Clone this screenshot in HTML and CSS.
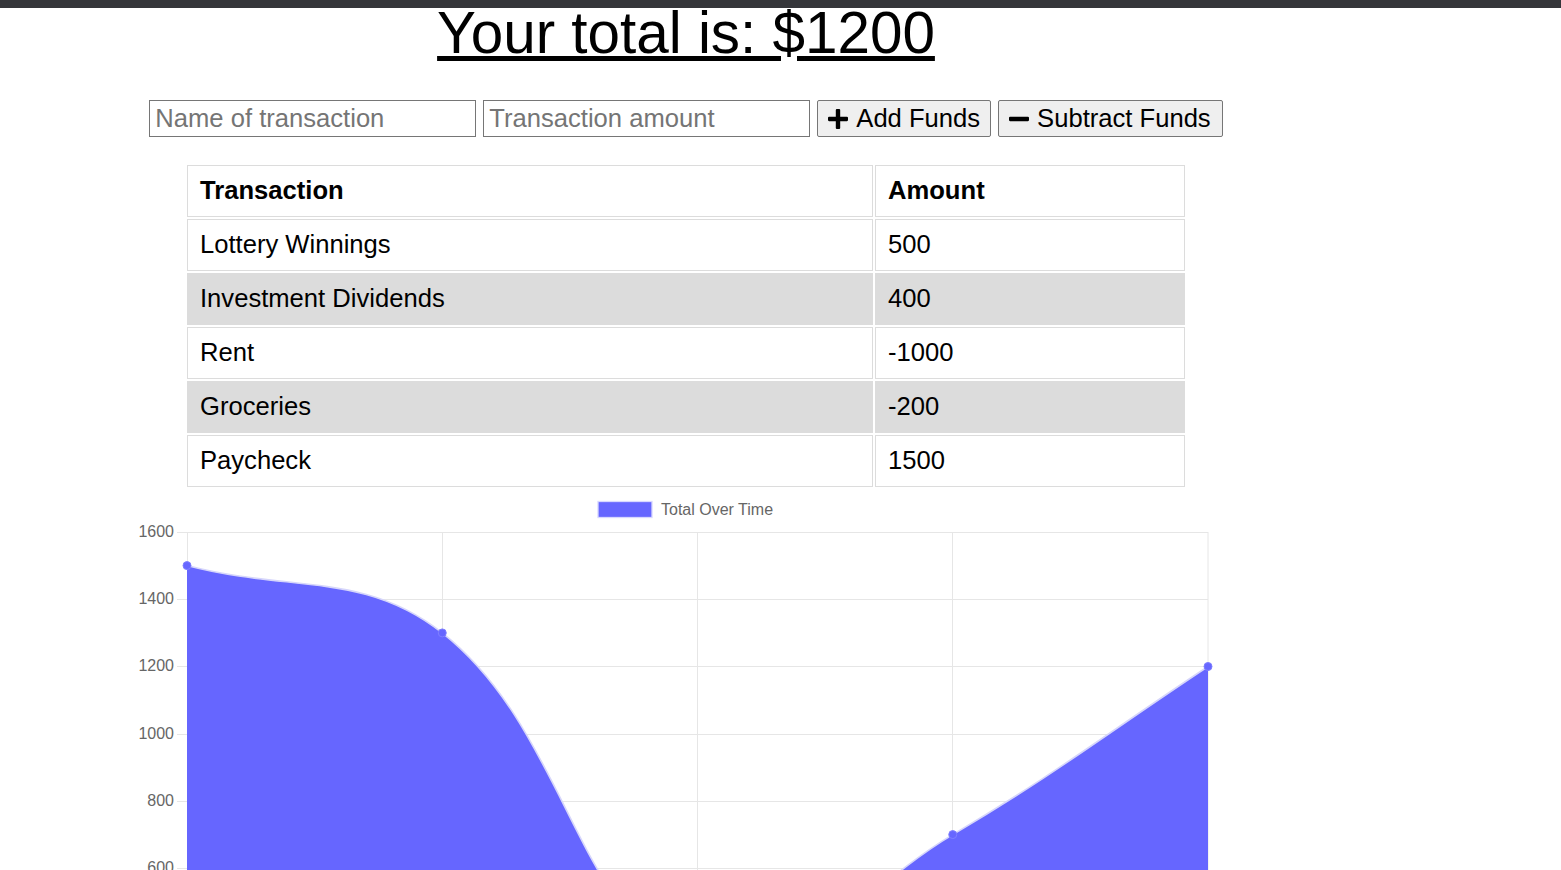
FILE: index.html
```html
<!DOCTYPE html>
<html lang="en">
<head>
<meta charset="utf-8">
<title>Budget Tracker</title>
<link rel="stylesheet" href="styles.css">
</head>
<body>
<div class="topbar"></div>
<div class="page">
  <h1 class="total">Your total is: $<span>1200</span></h1>
  <form class="entry">
    <input class="field" type="text" placeholder="Name of transaction">
    <input class="field" type="text" placeholder="Transaction amount">
    <button class="btn" type="button">
      <svg class="icon" viewBox="0 0 20 20" aria-hidden="true"><rect x="7.8" y="0" width="4.4" height="20" rx="1.1"/><rect x="0" y="7.8" width="20" height="4.4" rx="1.1"/></svg>
      <span>Add Funds</span>
    </button>
    <button class="btn" type="button">
      <svg class="icon" viewBox="0 0 20 20" aria-hidden="true"><rect x="0" y="7.8" width="20" height="4.4" rx="1.1"/></svg>
      <span>Subtract Funds</span>
    </button>
  </form>
  <table class="ledger">
    <thead>
      <tr><th class="col-name">Transaction</th><th class="col-amt">Amount</th></tr>
    </thead>
    <tbody>
      <tr><td>Lottery Winnings</td><td>500</td></tr>
      <tr><td>Investment Dividends</td><td>400</td></tr>
      <tr><td>Rent</td><td>-1000</td></tr>
      <tr><td>Groceries</td><td>-200</td></tr>
      <tr><td>Paycheck</td><td>1500</td></tr>
    </tbody>
  </table>
  <div class="chart">
    <svg class="chart-svg" viewBox="100 489 1172 541" width="1172" height="541">
      <g class="legend">
        <rect x="598" y="501.5" width="54" height="16" class="legend-box"/>
        <text x="661" y="509" class="axis-text legend-text">Total Over Time</text>
      </g>
      <g class="grid">
        <line x1="177" y1="532.5" x2="1208" y2="532.5"/>
        <line x1="177" y1="599.5" x2="1208" y2="599.5"/>
        <line x1="177" y1="666.5" x2="1208" y2="666.5"/>
        <line x1="177" y1="734.5" x2="1208" y2="734.5"/>
        <line x1="177" y1="801.5" x2="1208" y2="801.5"/>
        <line x1="177" y1="868.5" x2="1208" y2="868.5"/>
        <line x1="177" y1="935.5" x2="1208" y2="935.5"/>
        <line x1="177" y1="1002.5" x2="1208" y2="1002.5"/>
        <line x1="187.5" y1="532" x2="187.5" y2="1012"/>
        <line x1="442.5" y1="532" x2="442.5" y2="1012"/>
        <line x1="697.5" y1="532" x2="697.5" y2="1012"/>
        <line x1="952.5" y1="532" x2="952.5" y2="1012"/>
        <line x1="1208" y1="532" x2="1208" y2="1012"/>
      </g>
      <g class="axis-text ylabels">
        <text x="174" y="531">1600</text>
        <text x="174" y="598">1400</text>
        <text x="174" y="665">1200</text>
        <text x="174" y="733">1000</text>
        <text x="174" y="800">800</text>
        <text x="174" y="867">600</text>
        <text x="174" y="934">400</text>
        <text x="174" y="1001">200</text>
      </g>
      <path class="area" d="M187,565.6 C289.1,592.5 363.7,570.8 442.25,632.9 C567.9,732.2 576.2,921.2 697.5,969.1 C780.4,1001.9 853.6,893.4 952.75,834.6 C1057.8,772.3 1105.9,734.1 1208,666.5 L1208,1002.5 L187,1002.5 Z"/>
      <path class="line" d="M187,565.6 C289.1,592.5 363.7,570.8 442.25,632.9 C567.9,732.2 576.2,921.2 697.5,969.1 C780.4,1001.9 853.6,893.4 952.75,834.6 C1057.8,772.3 1105.9,734.1 1208,666.5"/>
      <g class="points">
        <circle cx="187" cy="565.6" r="4"/>
        <circle cx="442.25" cy="632.9" r="4"/>
        <circle cx="697.5" cy="969.1" r="4"/>
        <circle cx="952.75" cy="834.6" r="4"/>
        <circle cx="1208" cy="666.5" r="4"/>
      </g>
    </svg>
  </div>
</div>
</body>
</html>
```
FILE: styles.css
```css
html, body {
  margin: 0;
  padding: 0;
  background: #ffffff;
}

body {
  font-family: "Liberation Sans", Arial, sans-serif;
  color: #000;
}

.topbar {
  position: fixed;
  top: 0;
  left: 0;
  right: 0;
  height: 8px;
  background: #35363a;
  z-index: 10;
}

.page {
  width: 1372px;
  display: flex;
  flex-direction: column;
  align-items: center;
}

.total {
  margin: 0;
  font-size: 58.4px;
  line-height: 66px;
  font-weight: 400;
  text-decoration: underline;
}

.entry {
  margin: 34px 0 0;
  display: flex;
  gap: 7px;
}

.field {
  width: 327px;
  height: 37px;
  box-sizing: border-box;
  border: 1px solid #767676;
  border-radius: 0;
  padding: 0 5px;
  margin: 0;
  font-family: "Liberation Sans", Arial, sans-serif;
  font-size: 25.6px;
  color: #000;
  background: #fff;
}

.field::placeholder {
  color: #757575;
  opacity: 1;
}

.btn {
  height: 37px;
  box-sizing: border-box;
  display: inline-flex;
  align-items: center;
  gap: 8px;
  padding: 0 10px 0 10px;
  margin: 0;
  border: 1px solid #767676;
  border-radius: 2px;
  background: #efefef;
  color: #000;
  font-family: "Liberation Sans", Arial, sans-serif;
  font-size: 25.6px;
}

.btn + .btn {
  padding-right: 11px;
}

.icon {
  width: 20px;
  height: 20px;
  fill: #000;
  flex: none;
}

.ledger {
  margin-top: 26px;
  width: 1002px;
  table-layout: fixed;
  border-collapse: separate;
  border-spacing: 2px;
  font-size: 25.6px;
}

.ledger th,
.ledger td {
  border: 1px solid #dcdcdc;
  padding: 9px 12px 11px;
  line-height: 30px;
  text-align: left;
}

.ledger th {
  font-weight: 700;
}

.col-name {
  width: 660px;
}

.col-amt {
  width: 284px;
}

.ledger tbody tr:nth-child(even) td {
  background: #dcdcdc;
}

.chart {
  width: 1172px;
  height: 541px;
}

.chart-svg {
  display: block;
}

.grid line {
  stroke: #e6e6e6;
  stroke-width: 1;
}

.axis-text {
  font-family: "Liberation Sans", Arial, sans-serif;
  font-size: 16px;
  fill: #666666;
  dominant-baseline: central;
}

.ylabels text {
  text-anchor: end;
}

.legend-box {
  fill: #6666ff;
  stroke: #d8d8ff;
  stroke-width: 1.3;
}

.area {
  fill: #6666ff;
}

.line {
  fill: none;
  stroke: #d6d6fb;
  stroke-width: 1.6;
}

.points circle {
  fill: #6666ff;
  stroke: #7f7fff;
  stroke-width: 1;
}
```
